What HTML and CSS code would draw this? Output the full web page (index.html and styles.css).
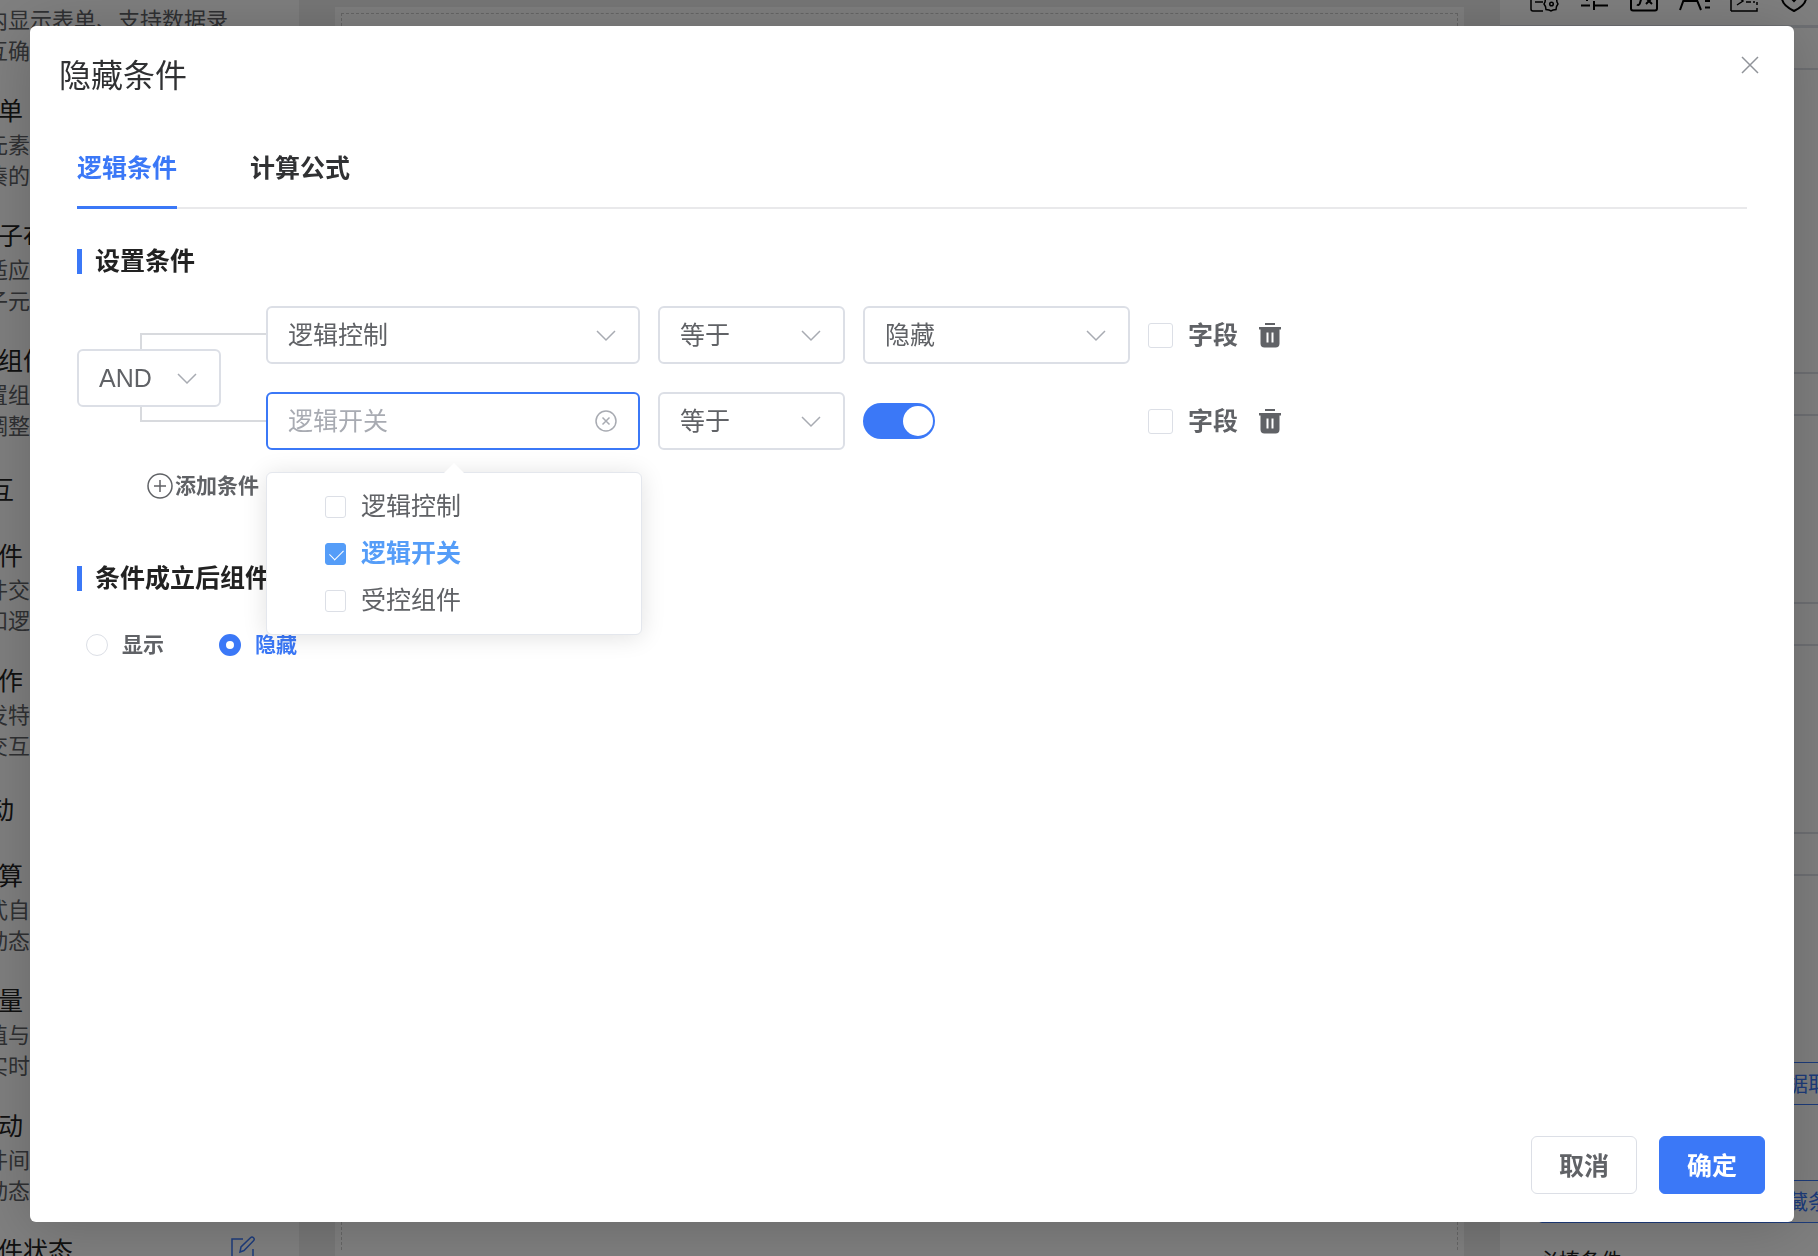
FILE: index.html
```html
<!DOCTYPE html>
<html lang="zh-CN">
<head>
<meta charset="utf-8">
<title>隐藏条件</title>
<link rel="stylesheet" href="styles.css">
</head>
<body>
<svg class="symbols" aria-hidden="true">
  <symbol id="chevron" viewBox="0 0 20 12"><path d="M1 1l9 9 9-9" fill="none" stroke="currentColor" stroke-width="1.5"/></symbol>
  <symbol id="trash" viewBox="0 0 22 25"><path d="M6 0h10v2H6zM0 4h22v2.500h-1.500v14a4 4 0 0 1-4 4h-11a4 4 0 0 1-4-4v-14H0zM7.500 9.500v10h2v-10zM12.500 9.500v10h2v-10z" fill="currentColor" fill-rule="evenodd"/></symbol>
</svg>

<div class="app">
  <aside class="library">
    <div class="library-scroll">
      <div class="item"><h4>单</h4><p>内显示表单、支持数据录<br>互确</p></div>
      <div class="item"><h4>单</h4><p>元素<br>凑的</p></div>
      <div class="item"><h4>子布</h4><p>适应<br>子元</p></div>
      <div class="item"><h4>组件</h4><p>置组<br>调整</p></div>
      <h3>互</h3>
      <div class="item"><h4>件</h4><p>件交<br>和逻</p></div>
      <div class="item"><h4>作</h4><p>发特<br>交互</p></div>
      <h3>动</h3>
      <div class="item"><h4>算</h4><p>式自<br>动态</p></div>
      <div class="item"><h4>量</h4><p>值与<br>实时</p></div>
      <div class="item"><h4>动</h4><p>件间<br>动态</p></div>
      <div class="item with-edit"><h4>件状态</h4>
        <svg class="edit" viewBox="0 0 26 26" fill="none" stroke="currentColor" stroke-width="1.500"><path d="M13 3H2v21h21V13"/><path d="M10 16l1-5 9.500-9.200a2 2 0 0 1 3 3L14 14.500z"/></svg>
      </div>
    </div>
  </aside>
  <main class="stage"><div class="canvas"><div class="drop-area"></div></div></main>
  <aside class="props">
    <div class="toolbar">
      <svg viewBox="0 0 30 30"><path d="M14 28H4a2 2 0 0 1-2-2V4h22v8M6 19h8M6 12h12"/><path d="M22 13l2.500 2.500h3l.5 3.500 1 2-1.500 2.500-.5 3-3 .5-2 1-2-1-3-.5-.5-3-1.500-2.500 1-2 .5-3.500h3z"/><circle cx="22.500" cy="21" r="1.800"/></svg>
      <svg viewBox="0 0 30 30" class="bold"><path d="M2 12h17M26 12h3M8 8v10M2 22.500h9M15 22.500h14M15 18v9"/></svg>
      <svg viewBox="0 0 30 30" class="bold"><rect x="2" y="4" width="26" height="23.500" rx="2"/><path d="M13 13l-2 7c-.5 2-2 2.500-3 1.500M17 15l6 6M23 15l-6 6"/></svg>
      <svg viewBox="0 0 30 30" class="bold"><path d="M1 27L9 5h4l9 22M4 18h14M26 18h5M26 24.500h5"/></svg>
      <svg viewBox="0 0 30 30"><path d="M2 28V4h26v12M28 19v3M28 25v3H2M9 14l5 4-6 4M17 19h5M24 19h2"/></svg>
      <svg viewBox="0 0 30 30" class="bold"><path d="M15 28c-6-3-12-7-12-13V6l12-4 12 4v9c0 6-6 10-12 13z"/><path d="M10 13l5 5 5-5"/></svg>
    </div>
    <section class="tall"><header></header></section>
    <section><header></header></section>
    <section><header></header></section>
    <section><header></header></section>
    <div class="rules">
      <button type="button">数据取值</button>
      <button type="button">隐藏条件</button>
      <h4>必填条件</h4>
    </div>
  </aside>
</div>

<div class="overlay">
  <div class="dialog" role="dialog" aria-modal="true" aria-labelledby="dialog-title">
    <header class="dialog-head">
      <h1 id="dialog-title">隐藏条件</h1>
      <button type="button" class="close" aria-label="关闭"><svg viewBox="0 0 18 18"><path d="M1 1l16 16M17 1L1 17" fill="none" stroke="currentColor" stroke-width="1.500"/></svg></button>
    </header>

    <div class="dialog-body">
      <nav class="tabs">
        <a href="#logic" class="active">逻辑条件</a>
        <a href="#formula">计算公式</a>
      </nav>

      <h2>设置条件</h2>
      <div class="group">
        <div class="operator">
          <div class="select join">
            <select aria-label="逻辑关系"><option>AND</option></select>
            <svg class="chevron"><use href="#chevron"/></svg>
          </div>
        </div>
        <div class="rows">
          <div class="row">
            <div class="select field">
              <select aria-label="组件"><option>逻辑控制</option></select>
              <svg class="chevron"><use href="#chevron"/></svg>
            </div>
            <div class="select compare">
              <select aria-label="比较"><option>等于</option></select>
              <svg class="chevron"><use href="#chevron"/></svg>
            </div>
            <div class="value"><div class="select">
              <select aria-label="值"><option>隐藏</option></select>
              <svg class="chevron"><use href="#chevron"/></svg>
            </div></div>
            <label class="check"><input type="checkbox">字段</label>
            <button type="button" class="remove" aria-label="删除"><svg><use href="#trash"/></svg></button>
          </div>
          <div class="row">
            <div class="select field focused">
              <input type="text" aria-label="组件" placeholder="逻辑开关">
              <button type="button" class="clear" aria-label="清空"><svg viewBox="0 0 22 22" fill="none" stroke="currentColor" stroke-width="1.500"><circle cx="11" cy="11" r="10"/><path d="M7.500 7.500l7 7M14.500 7.500l-7 7"/></svg></button>
              <div class="popover">
                <label><input type="checkbox">逻辑控制</label>
                <label class="picked"><input type="checkbox" checked>逻辑开关</label>
                <label><input type="checkbox">受控组件</label>
              </div>
            </div>
            <div class="select compare">
              <select aria-label="比较"><option>等于</option></select>
              <svg class="chevron"><use href="#chevron"/></svg>
            </div>
            <div class="value"><input type="checkbox" role="switch" class="switch" aria-label="值" checked></div>
            <label class="check"><input type="checkbox">字段</label>
            <button type="button" class="remove" aria-label="删除"><svg><use href="#trash"/></svg></button>
          </div>
        </div>
      </div>
      <button type="button" class="add"><svg viewBox="0 0 26 26" fill="none" stroke="currentColor" stroke-width="1.500"><circle cx="13" cy="13" r="12"/><path d="M13 7v12M7 13h12"/></svg>添加条件</button>

      <h2>条件成立后组件</h2>
      <div class="radios">
        <label><input type="radio" name="result">显示</label>
        <label class="picked"><input type="radio" name="result" checked>隐藏</label>
      </div>
    </div>

    <footer class="dialog-foot">
      <button type="button" class="btn">取消</button>
      <button type="button" class="btn primary">确定</button>
    </footer>
  </div>
</div>
</body>
</html>
```
FILE: styles.css
```css
:root {
  --blue: #3b78f7;
  --text: #606266;
  --dark: #222222;
  --line: #dcdfe6;
}

* { box-sizing: border-box; }

body {
  margin: 0;
  overflow: hidden;
  background: #eeeeee;
  color: var(--text);
  font-family: "Liberation Sans", "Noto Sans CJK SC", sans-serif;
  font-size: 25px;
}

h1, h2, h3, h4, p { margin: 0; font-weight: 400; }
button, input, select { font: inherit; color: inherit; }
button { padding: 0; border: 0; background: none; }
svg { display: block; }
.symbols { display: none; }

/* Editor behind the dialog */
.app { display: flex; height: 100vh; overflow: hidden; }

.library { flex: 0 0 299px; overflow: hidden; background: #ffffff; white-space: nowrap; }
.library-scroll { margin: -33px 0 0 -14px; }
.library .item { height: 100px; margin-bottom: 25px; }
.library h4 { padding-left: 12px; line-height: 38px; color: var(--dark); }
.library p { font-size: 22px; line-height: 31px; }
.library h3 { height: 70px; padding-left: 3px; font-size: 25px; line-height: 46px; color: var(--dark); }
.library .with-edit { display: flex; justify-content: space-between; padding-right: 43px; }
.edit { width: 26px; height: 26px; margin-top: 4px; color: var(--blue); }

.stage { flex: 1; padding: 7px 36px 0; }
.canvas { height: 100%; padding: 6px; background: #ffffff; }
.drop-area { height: 100%; border: 1px dashed #cccccc; border-bottom: 0; }

.props { flex: 0 0 318px; overflow: hidden; background: #ffffff; }
.toolbar { display: flex; gap: 20px; width: 620px; height: 26px; padding-left: 29px; border-bottom: 1px solid var(--line); }
.toolbar svg { flex: none; width: 30px; height: 30px; margin-top: -17px; overflow: visible; fill: none; stroke: #000000; stroke-width: 1.5; }
.toolbar .bold { stroke-width: 2; }
.props section { height: 230px; }
.props section.tall { height: 346px; }
.props section header { height: 44px; border: solid var(--line); border-width: 2px 0; }
.rules { width: 616px; padding: 0 38px; }
.rules button { display: block; width: 100%; height: 43px; margin-bottom: 75px; padding-bottom: 3px; border: 1px solid var(--blue); border-radius: 4px; color: var(--blue); font-size: 21px; }
.rules h4 { margin-top: -52px; font-size: 21px; line-height: 30px; color: var(--dark); }

/* Dialog */
.overlay { position: fixed; inset: 0; padding: 26px 24px 34px 30px; background: rgba(0, 0, 0, 0.5); }
.dialog { display: flex; flex-direction: column; height: 100%; border-radius: 6px; background: #ffffff; box-shadow: 0 4px 60px rgba(0, 0, 0, 0.2); }

.dialog-head { display: flex; justify-content: space-between; padding: 26px 35px 0 29px; }
.dialog-head h1 { font-size: 32px; line-height: 48px; color: #303133; }
.close { align-self: flex-start; margin-top: 4px; color: #909399; }
.close svg { width: 18px; height: 18px; }

.dialog-body { flex: 1; padding: 32px 47px 0; }

.tabs { display: flex; gap: 73px; margin-bottom: 34px; border-bottom: 2px solid #e9e9eb; }
.tabs a { height: 77px; margin-bottom: -2px; border-bottom: 3px solid transparent; line-height: 72px; font-weight: 600; color: #303133; text-decoration: none; }
.tabs .active { border-color: var(--blue); color: var(--blue); }

h2 { display: flex; align-items: center; gap: 13px; font-size: 25px; line-height: 36px; font-weight: 600; color: var(--dark); }
h2::before { content: ""; width: 5px; height: 25px; background: var(--blue); }

.group { position: relative; display: flex; margin-top: 27px; }
.group::before { content: ""; position: absolute; left: 63px; top: 27px; bottom: 28px; width: 126px; border: 2px solid #d8dade; border-right: 0; }
.operator { display: flex; align-items: center; flex: 0 0 189px; }
.rows { display: flex; flex-direction: column; gap: 28px; }
.row { display: flex; align-items: center; gap: 18px; }

.select { position: relative; height: 58px; }
.select > select, .select > input { display: block; width: 100%; height: 100%; padding: 0 20px; border: 2px solid var(--line); border-radius: 6px; background: #ffffff; appearance: none; outline: 0; }
.select > input::placeholder { color: #a8abb2; opacity: 1; }
.focused > input { border-color: var(--blue); }
.chevron { position: absolute; right: 24px; top: 24px; width: 20px; height: 12px; color: #a8abb2; pointer-events: none; }
.clear { position: absolute; right: 23px; top: 18px; color: #a8abb2; }
.clear svg { width: 22px; height: 22px; }
.join { width: 144px; }
.field { width: 374px; }
.compare { width: 187px; }
.value { width: 267px; }

input[type="checkbox"], input[type="radio"] { flex: none; margin: 0; appearance: none; border: 1px solid var(--line); background: #ffffff; }
.check { display: flex; align-items: center; gap: 15px; line-height: 36px; font-weight: 600; }
.check input { width: 25px; height: 25px; border-radius: 3px; }
.remove { margin-left: 3px; }
.remove svg { width: 22px; height: 25px; }

.value .switch { display: block; width: 72px; height: 36px; padding: 3px 2px; border: 0; border-radius: 18px; background: var(--blue); }
.switch::before { content: ""; display: block; width: 30px; height: 30px; margin-left: auto; border-radius: 50%; background: #ffffff; }

.popover { position: absolute; z-index: 2; left: 0; top: 80px; display: flex; flex-direction: column; width: 376px; padding: 10px 58px; border: 1px solid #e4e7ed; border-radius: 6px; background: #ffffff; box-shadow: 0 2px 24px rgba(0, 0, 0, 0.12); }
.popover::before { content: ""; position: absolute; left: 50%; top: -10px; width: 22px; height: 11px; margin-left: -11px; background: #ffffff; clip-path: polygon(50% 0, 100% 100%, 0 100%); }
.popover label { display: flex; align-items: center; gap: 15px; line-height: 47px; }
.popover input { width: 21px; height: 22px; border-radius: 3px; }
.popover .picked { font-weight: 700; color: #559df8; }
.popover input:checked { border-color: #559df8; background: #559df8; }
.popover input:checked::before { content: ""; display: block; width: 12px; height: 7px; margin: 5px 0 0 4px; border: solid #ffffff; border-width: 0 0 1px 1px; rotate: -45deg; }

.add { display: flex; align-items: center; gap: 2px; margin: 20px 0 58px 70px; font-size: 21px; line-height: 32px; font-weight: 600; }
.add svg { width: 26px; height: 26px; }

.radios { display: flex; gap: 55px; margin: 33px 0 0 9px; font-size: 21px; line-height: 32px; font-weight: 600; }
.radios label { display: flex; align-items: center; gap: 14px; }
.radios input { width: 22px; height: 22px; border-radius: 50%; }
.radios input:checked { border: 7px solid var(--blue); }
.radios .picked { color: var(--blue); }

.dialog-foot { display: flex; justify-content: flex-end; gap: 22px; padding: 0 29px 28px; }
.btn { width: 106px; height: 58px; padding-bottom: 2px; border: 1px solid var(--line); border-radius: 6px; background: #ffffff; font-weight: 600; }
.primary { border-color: var(--blue); background: var(--blue); color: #ffffff; }
```
